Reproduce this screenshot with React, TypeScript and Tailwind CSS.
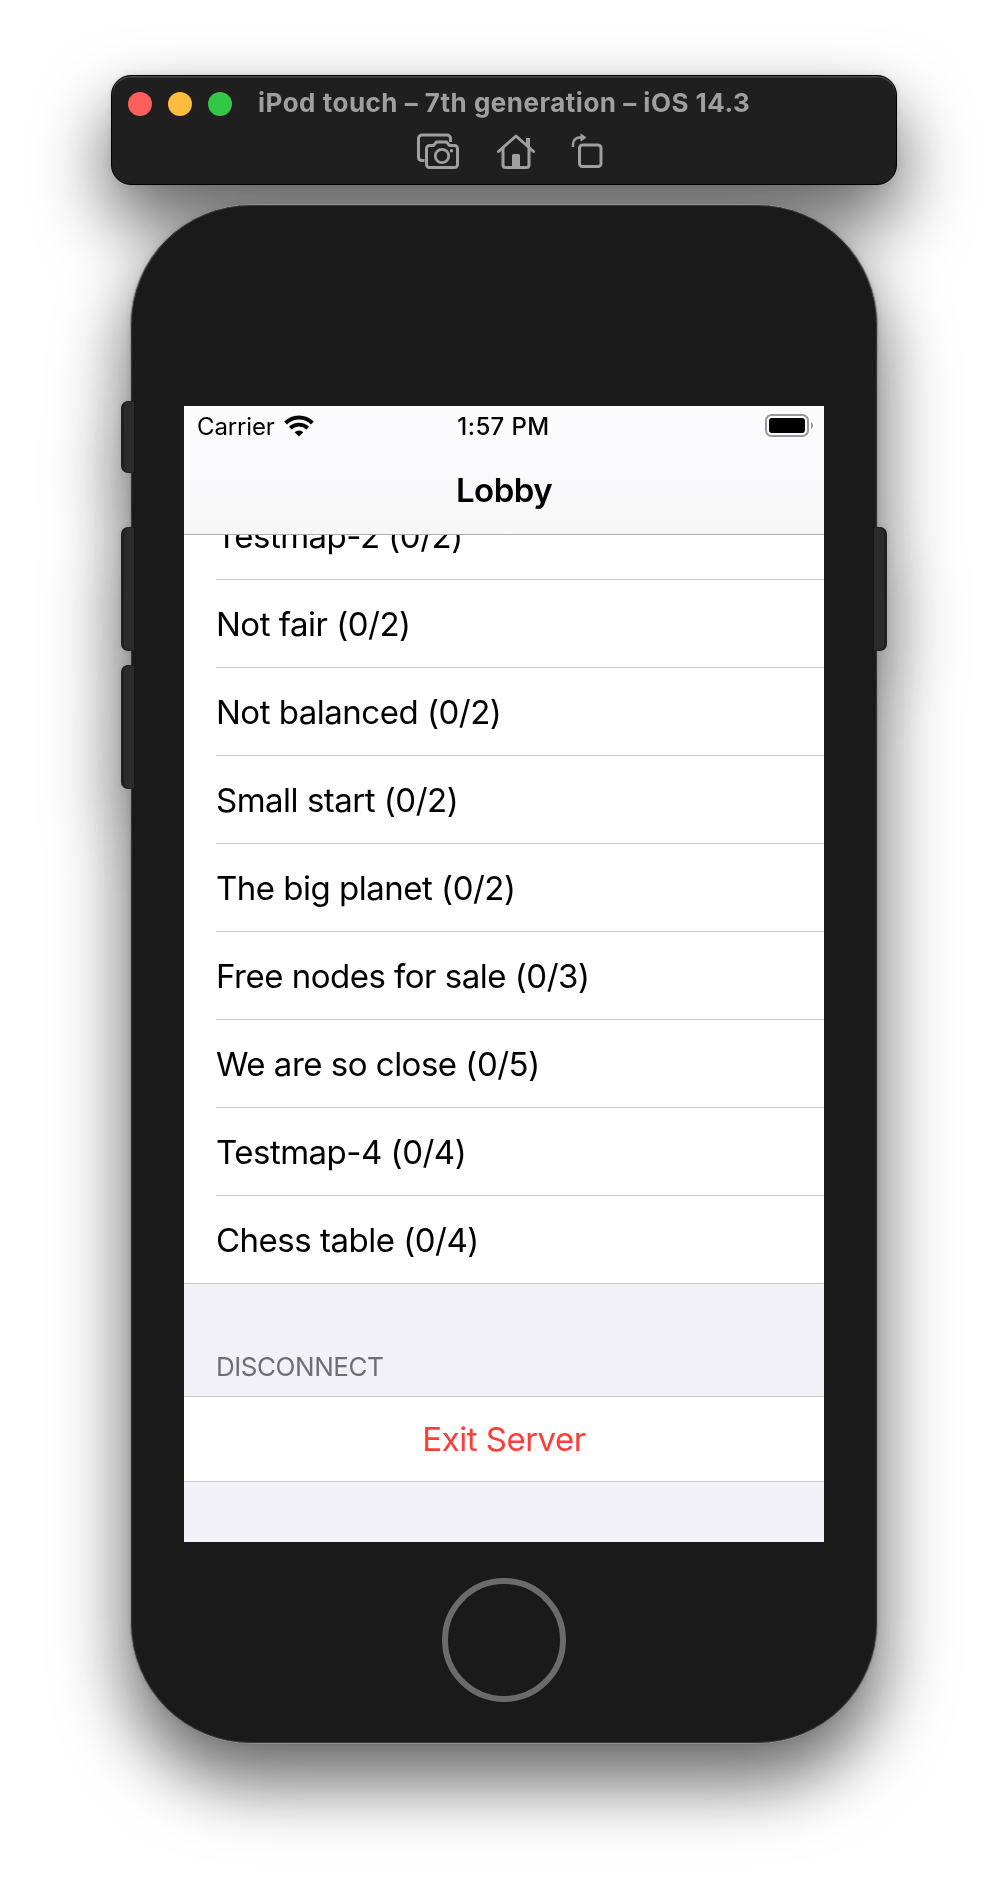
import React from "react";

const maps = [
  "Not fair (0/2)",
  "Not balanced (0/2)",
  "Small start (0/2)",
  "The big planet (0/2)",
  "Free nodes for sale (0/3)",
  "We are so close (0/5)",
  "Testmap-4 (0/4)",
  "Chess table (0/4)",
];

function ScreenshotIcon() {
  return (
    <svg width="44" height="38" viewBox="0 0 44 38" fill="none" stroke="#a09fa0" strokeWidth="3" strokeLinejoin="round">
      <path d="M8.500 27.500H5.500a3.500 3.500 0 0 1-3-3.500V5.500A3.500 3.500 0 0 1 6 2h25a3.500 3.500 0 0 1 3.500 3.500V9" />
      <path d="M13.500 12.500h4l3-3.500h10l3 3.500h5a3 3 0 0 1 3 3V31.500a3 3 0 0 1-3 3h-25a3 3 0 0 1-3-3V15.500a3 3 0 0 1 3-3Z" />
      <circle cx="26" cy="23" r="6.700" strokeWidth="2.800" />
      <circle cx="35.500" cy="17.800" r="1.700" fill="#a09fa0" stroke="none" />
    </svg>
  );
}

function HomeIcon() {
  return (
    <svg width="40" height="38" viewBox="0 0 40 38" fill="none" stroke="#a09fa0" strokeWidth="3" strokeLinecap="round" strokeLinejoin="round">
      <path d="M2.500 18.500 20 3l17.500 15.500" />
      <path d="M7 15v17a2.500 2.500 0 0 0 2.500 2.500h21A2.500 2.500 0 0 0 33 32V15" />
      <path d="M32 5v9" strokeWidth="4" strokeLinecap="butt" />
      <path d="M16 22.500a1.500 1.500 0 0 1 1.500-1.500h5a1.500 1.500 0 0 1 1.500 1.500V34H16Z" fill="#a09fa0" stroke="none" />
    </svg>
  );
}

function RotateIcon() {
  return (
    <svg width="34" height="38" viewBox="0 0 34 38" fill="none" stroke="#a09fa0" strokeWidth="3">
      <rect x="8.500" y="12" width="21.500" height="21.500" rx="3" />
      <path d="M2 14V11.500A6.500 6.500 0 0 1 8.500 4.500H11" strokeWidth="2.400" />
      <path d="M9.500 .3 15.500 4.500l-6 4.200Z" fill="#a09fa0" stroke="none" />
    </svg>
  );
}

function WifiIcon() {
  return (
    <svg width="30" height="22" viewBox="0 0 30 22" fill="none" stroke="#000" strokeWidth="4">
      <path d="M1.600 8a19 19 0 0 1 26.800 0" />
      <path d="M6.300 13.200a12.300 12.300 0 0 1 17.400 0" strokeWidth="3.800" />
      <path d="M15 21.500 10.700 17.300a6.100 6.100 0 0 1 8.600 0Z" fill="#000" stroke="none" />
    </svg>
  );
}

function BatteryIcon() {
  return (
    <svg width="49" height="24" viewBox="0 0 49 24" fill="none">
      <rect x="1" y="1" width="42" height="21" rx="5.500" stroke="#98989b" strokeWidth="2" />
      <rect x="4" y="4" width="36" height="15" rx="3" fill="#000" />
      <path d="M46 8c1.300.7 2 2 2 3.500S47.300 14.300 46 15Z" fill="#98989b" />
    </svg>
  );
}

function SideButton({ className }: { className: string }) {
  return <div className={`absolute w-[13px] border-y border-[#202020] bg-[#2b2b2b] ${className}`} />;
}

export default function App() {
  return (
    <div className="flex h-[1892px] w-[1008px] flex-col items-center overflow-hidden bg-white pt-[75px] font-['Inter',sans-serif]">
      <div className="flex flex-col items-center [filter:drop-shadow(0_36px_36px_rgba(0,0,0,0.58))_drop-shadow(0_0_3px_rgba(0,0,0,0.12))]">
        <header className="h-[110px] w-[786px] rounded-[20px] border border-black bg-[#1f1f1f] shadow-[inset_0_1.5px_0_#4b4b4b]">
          <div className="flex h-[56px] items-center pl-4">
            <div className="flex gap-4">
              <span className="size-6 rounded-full bg-[#ff5f5b]" />
              <span className="size-6 rounded-full bg-[#fdbb40]" />
              <span className="size-6 rounded-full bg-[#33c748]" />
            </div>
            <h1 className="ml-[26px] -mt-0.5 text-[26px] leading-8 font-bold tracking-[0.5px] whitespace-nowrap text-[#a09fa0]">
              iPod touch – 7th generation – iOS 14.3
            </h1>
          </div>
          <div className="flex pt-px pl-[304px]">
            <ScreenshotIcon />
            <div className="ml-[36px]"><HomeIcon /></div>
            <div className="ml-[35px]"><RotateIcon /></div>
          </div>
        </header>

        <div className="relative mt-[19px] h-[1540px] w-[748px]">
          <div className="flex h-full flex-col items-center rounded-[121px] border border-[#909090] bg-[#1a1a1a] pt-[201px] shadow-[inset_0_0_0_1px_#3a3a3a]">
            <main className="flex h-[1136px] w-[640px] shrink-0 flex-col overflow-hidden bg-[#f2f1f7] text-black">
              <div className="h-[129px] shrink-0 border-b border-[#acacac] bg-linear-to-b from-[#fcfbfe] to-[#f7f7f8]">
                <div className="grid h-10 grid-cols-3 items-center pr-[10px] pl-[13px]">
                  <div className="flex items-center gap-[9px]">
                    <span className="pt-0.5 text-[24px] tracking-[-0.15px]">Carrier</span>
                    <WifiIcon />
                  </div>
                  <span className="pt-0.5 pr-1 text-center text-[24px] font-medium tracking-[0.4px]">1:57 PM</span>
                  <div className="flex justify-end"><BatteryIcon /></div>
                </div>
                <h2 className="pt-[22px] text-center text-[33px] leading-[44px] font-semibold tracking-[-0.5px]">Lobby</h2>
              </div>
              <ul className="shrink-0 border-b border-[#c6c5c9] bg-white pl-8 text-[33px] tracking-[-0.5px]">
                <li className="flex h-[45px] items-end overflow-hidden border-b border-[#c6c5c9]">
                  <span className="shrink-0 leading-[86px]">Testmap-2 (0/2)</span>
                </li>
                {maps.map((name) => (
                  <li key={name} className="flex h-[88px] items-center border-b border-[#c6c5c9] pt-0.5 last:h-[87px] last:border-0">
                    <span>{name}</span>
                  </li>
                ))}
              </ul>
              <h3 className="flex h-[112px] shrink-0 items-end pb-[11px] pl-8 text-[26px] leading-[36px] tracking-[-0.45px] text-[#6d6d72]">DISCONNECT</h3>
              <button className="flex h-[86px] shrink-0 items-center justify-center border-y border-[#c6c5c9] bg-white pt-0.5 text-[33px] tracking-[-0.5px] text-[#ff3e37]">
                Exit Server
              </button>
            </main>
            <div className="mt-9 size-[124px] shrink-0 rounded-full border-[6px] border-[#6b6b6b]" />
          </div>
          <SideButton className="top-[197px] -left-[9px] h-[72px] rounded-l-[7px] border-l-[3px]" />
          <SideButton className="top-[323px] -left-[9px] h-[124px] rounded-l-[7px] border-l-[3px]" />
          <SideButton className="top-[461px] -left-[9px] h-[124px] rounded-l-[7px] border-l-[3px]" />
          <SideButton className="top-[323px] -right-[9px] h-[124px] rounded-r-[7px] border-r-[3px]" />
        </div>
      </div>
    </div>
  );
}
